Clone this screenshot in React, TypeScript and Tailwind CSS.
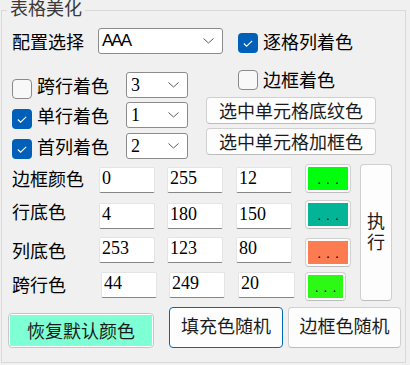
import React from "react";

const btn =
  "rounded-[4px] border border-[#d0d0d0] border-b-[#bdbdbd] bg-[#fdfdfd] text-[#1b1b1b]";

function Check({ checked, className = "" }: { checked?: boolean; className?: string }) {
  if (checked) {
    return (
      <span
        className={`flex h-[20px] w-[20px] shrink-0 items-center justify-center rounded-[4px] bg-[#005fb8] ${className}`}
      >
        <svg width="10" height="7" viewBox="0 0 10 7">
          <polyline points="0.8,3.5 3.6,6.2 9.2,0.8" fill="none" stroke="white" strokeWidth="1.1" />
        </svg>
      </span>
    );
  }
  return (
    <span
      className={`h-[20px] w-[20px] shrink-0 rounded-[4px] border border-[#8a8a8a] bg-[#f8f8f8] ${className}`}
    />
  );
}

function Combo({ value, className = "", valueClass = "" }: { value: string; className?: string; valueClass?: string }) {
  return (
    <div
      className={`flex shrink-0 items-center justify-between rounded-[3px] border border-[#8b8b8b] bg-white pr-[8px] ${className}`}
    >
      <span className={valueClass}>{value}</span>
      <svg width="11" height="6" viewBox="0 0 11 6">
        <polyline points="0.5,0.5 5.5,5 10.5,0.5" fill="none" stroke="#5c5c5c" strokeWidth="1" />
      </svg>
    </div>
  );
}

function Num({ v, className = "" }: { v: string; className?: string }) {
  return (
    <div
      className={`h-[26px] shrink-0 rounded-[2px] border border-[#e4e4e4] border-b-[#868686] bg-white pl-[2px] font-['Liberation_Serif',serif] leading-[20px] ${className}`}
    >
      {v}
    </div>
  );
}

function Swatch({ color, className = "" }: { color: string; className?: string }) {
  return (
    <button className={`h-[29px] shrink-0 p-[2px] ${btn} ${className}`}>
      <span
        className="flex h-full w-full items-center justify-center pl-[5px] font-['Liberation_Sans',sans-serif] text-[14px] leading-[14px] tracking-[5px] text-black"
        style={{ backgroundColor: color }}
      >
        ...
      </span>
    </button>
  );
}

const rows = [
  { label: "跨行着色", checked: false, value: "3", top: "mt-0", cb: "mt-[7px]" },
  { label: "单行着色", checked: true, value: "1", top: "mt-[4px]", cb: "mt-[7px]" },
  { label: "首列着色", checked: true, value: "2", top: "mt-[5px]", cb: "mt-[6px]" },
];

export default function App() {
  return (
    <div className="h-[365px] w-[410px] overflow-hidden bg-[#f0f0f0] pl-[1px] pt-[10px] font-['Noto_Sans_CJK_SC',sans-serif] text-[18px] text-black">
      <div className="relative h-[353px] w-[405px] border border-[#d9d9d9]">
        <span className="absolute left-[5px] top-[-14px] bg-[#f0f0f0] px-[3px] leading-[20px] text-[#3a3a3a]">
          表格美化
        </span>

        {/* 配置选择 */}
        <div className="mt-[17px] flex h-[26px] items-start pl-[10px]">
          <span className="w-[86px] shrink-0 leading-[26px]">配置选择</span>
          <Combo
            value="AAA"
            className="h-[26px] w-[125px] pl-[3px]"
            valueClass="font-['Liberation_Sans',sans-serif] text-[17px] tracking-[-2px]"
          />
          <Check checked className="ml-[15px] mt-[5px]" />
          <span className="ml-[5px] leading-[26px]">逐格列着色</span>
        </div>

        {/* 着色选项 */}
        <div className="mt-[16px] flex h-[89px] items-start pl-[10px]">
          <div className="mt-[2px] flex w-[176px] shrink-0 flex-col">
            {rows.map((r) => (
              <div key={r.label} className={`flex h-[26px] items-start ${r.top}`}>
                <Check checked={r.checked} className={r.cb} />
                <span className="ml-[5px] w-[89px] shrink-0 leading-[26px]">{r.label}</span>
                <Combo
                  value={r.value}
                  className="h-[26px] w-[62px] pl-[4px]"
                  valueClass="font-['Liberation_Serif',serif]"
                />
              </div>
            ))}
          </div>
          <div className="ml-[18px] flex w-[170px] shrink-0 flex-col">
            <div className="flex h-[27px] items-start pl-[32px]">
              <Check />
              <span className="ml-[5px] leading-[18px]">边框着色</span>
            </div>
            <button className={`h-[27px] w-[170px] leading-[25px] ${btn}`}>选中单元格底纹色</button>
            <button className={`mt-[4px] h-[27px] w-[170px] leading-[25px] ${btn}`}>选中单元格加框色</button>
          </div>
        </div>

        {/* 颜色 */}
        <div className="mt-[5px] flex items-start pl-[10px]">
          <div className="flex w-[339px] shrink-0 flex-col">
            <div className="flex h-[36px] items-start">
              <span className="mt-[1px] w-[87px] shrink-0 leading-[26px]">边框颜色</span>
              <Num v="0" className="mt-[3px] w-[56px]" />
              <Num v="255" className="ml-[12px] mt-[3px] w-[56px]" />
              <Num v="12" className="ml-[13px] mt-[3px] w-[56px]" />
              <Swatch color="#00ff0c" className="ml-[13px] w-[46px]" />
            </div>
            <div className="flex h-[37px] items-start">
              <span className="w-[87px] shrink-0 leading-[22px]">行底色</span>
              <Num v="4" className="mt-[3px] w-[56px]" />
              <Num v="180" className="ml-[12px] mt-[3px] w-[56px]" />
              <Num v="150" className="ml-[13px] mt-[3px] w-[56px]" />
              <Swatch color="#04b496" className="ml-[13px] w-[46px]" />
            </div>
            <div className="flex h-[35px] items-start">
              <span className="w-[87px] shrink-0 leading-[26px]">列底色</span>
              <Num v="253" className="w-[56px]" />
              <Num v="123" className="ml-[12px] w-[56px]" />
              <Num v="80" className="ml-[13px] w-[56px]" />
              <Swatch color="#fd7b50" className="ml-[13px] mt-[1px] w-[46px]" />
            </div>
            <div className="flex h-[29px] items-start">
              <span className="w-[89px] shrink-0 leading-[24px]">跨行色</span>
              <Num v="44" className="w-[56px]" />
              <Num v="249" className="ml-[12px] w-[56px]" />
              <Num v="20" className="ml-[13px] w-[57px]" />
              <Swatch color="#2cf914" className="ml-[10px] w-[41px]" />
            </div>
          </div>
          <button
            className={`ml-[9px] h-[137px] w-[32px] shrink-0 pb-[3px] leading-[21px] ${btn}`}
          >
            执<br />行
          </button>
        </div>

        {/* 底部按钮 */}
        <div className="mt-[6px] flex items-start pl-[6px]">
          <button className="mt-[6px] h-[35px] w-[146px] shrink-0 rounded-[4px] border border-[#c6c6c6] bg-white p-[1px]">
            <span className="block h-full w-full bg-[#7fffd4] pb-[3px] leading-[30px] text-[#1b1b1b]">
              恢复默认颜色
            </span>
          </button>
          <button className="ml-[15px] h-[41px] w-[114px] shrink-0 rounded-[4px] border border-[#0067c0] bg-[#fdfdfd] pb-[4px] text-[#1b1b1b]">
            填充色随机
          </button>
          <button className={`ml-[5px] h-[41px] w-[113px] shrink-0 pb-[4px] ${btn}`}>边框色随机</button>
        </div>
      </div>
    </div>
  );
}
